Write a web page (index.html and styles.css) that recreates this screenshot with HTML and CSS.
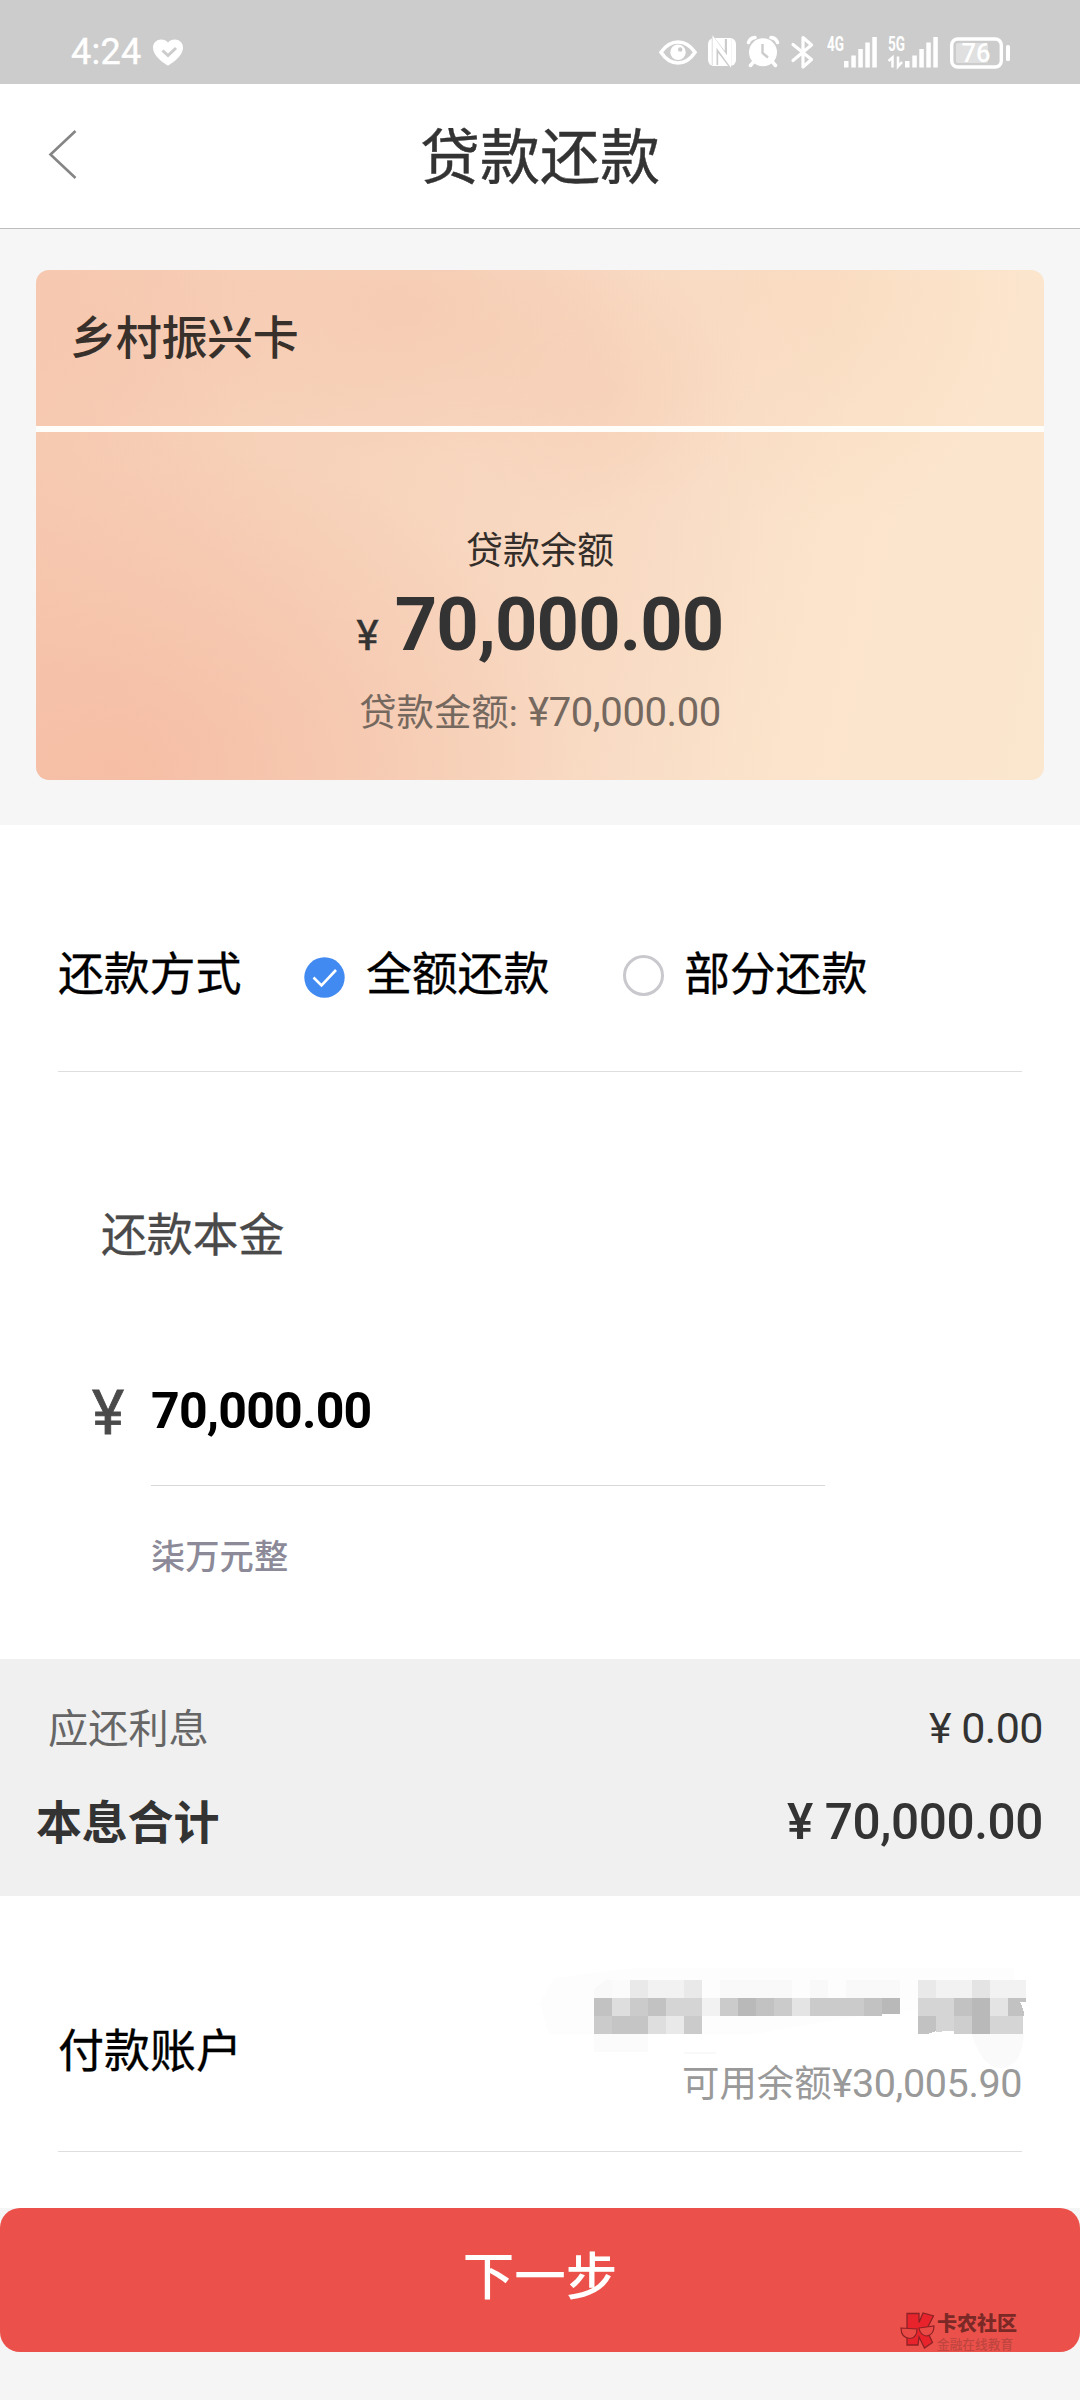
FILE: index.html
```html
<!DOCTYPE html>
<html lang="zh-CN">
<head>
<meta charset="utf-8">
<title>贷款还款</title>
<link rel="stylesheet" href="styles.css">
</head>
<body>
<div class="status">
  <span class="time">4:24</span>
  <svg class="heart" width="30" height="27" viewBox="0 0 30 27"><path fill="#fff" d="M15 26.500C12 25 0 17.500 0 8.500 0 3.500 4 .5 8 .5c3 0 5.500 1.200 7 3 1.500-1.800 4-3 7-3 4 0 8 3 8 8 0 9-12 16.500-15 18z"/><path d="M9.500 11.500l5.500 5 8-7.500" fill="none" stroke="#ccc" stroke-width="3"/></svg>
  <div class="icons">
    <svg width="38" height="36" viewBox="0 0 38 36"><path d="M2 18.300C7 11 12.500 8 19 8s12 3 17 10.300C31 26 25.500 29 19 29S7 26 2 18.300z" fill="none" stroke="#fff" stroke-width="3.600"/><circle cx="19" cy="18.300" r="7.700" fill="#fff"/><circle cx="21.200" cy="15.500" r="2.200" fill="#ccc"/></svg>
    <svg class="nfc" width="28" height="36" viewBox="0 0 28 36"><rect y="4" width="28" height="28" rx="6" fill="#fff"/><path d="M7 31V9.500l13 17V5" fill="none" stroke="#ccc" stroke-width="6.400"/><path d="M6.500 32V7.500l14.500 20V4" fill="none" stroke="#fff" stroke-width="4"/></svg>
    <svg class="alarm" width="32" height="36" viewBox="0 0 32 36"><circle cx="16" cy="18.300" r="14" fill="#fff"/><path d="M1.500 8.500Q3 4 8 3.500M30.500 8.500Q29 4 24 3.500M6.500 28L3.500 31.500M25.500 28l3 3.500" stroke="#fff" stroke-width="3.500" fill="none" stroke-linecap="round"/><path d="M15.500 10v9l5.500 4.500" fill="none" stroke="#ccc" stroke-width="2.400"/></svg>
    <svg class="bt" width="24" height="36" viewBox="0 0 24 36"><path d="M2 10.500l18.500 15-8.500 7.500V3.500l8.500 7.500L2 26.500" fill="none" stroke="#fff" stroke-width="3.200" stroke-linejoin="round" stroke-linecap="round"/></svg>
    <svg class="sig" width="50" height="36" viewBox="0 0 50 36"><text x="0" y="17.300" class="net" textLength="17" lengthAdjust="spacingAndGlyphs">4G</text><path fill="#fff" d="M17 27h4.500v6.500H17zM24.300 21.500h4.500v12h-4.500zM31.300 15h4.500v18.500h-4.500zM38.300 8.500h4.500v25h-4.500zM45.300 3h4.500v30.500h-4.500z"/></svg>
    <svg class="sig2" width="50" height="36" viewBox="0 0 50 36"><text x="0" y="17.300" class="net" textLength="17" lengthAdjust="spacingAndGlyphs">5G</text><path fill="#fff" d="M17 27h4.500v6.500H17zM24.300 21.500h4.500v12h-4.500zM31.300 15h4.500v18.500h-4.500zM38.300 8.500h4.500v25h-4.500zM45.300 3h4.500v30.500h-4.500z"/><path d="M.5 27l4-3.500V33.500M10 22.500v10l4-4.500" fill="none" stroke="#fff" stroke-width="2.500"/></svg>
    <svg class="bat" width="61" height="36" viewBox="0 0 61 36"><rect x="1.700" y="5" width="49.600" height="28" rx="6" fill="none" stroke="#fff" stroke-width="3.400"/><rect x="6" y="9" width="32" height="20" rx="2" fill="#e0e0e0"/><text x="11.500" y="28" class="level" textLength="29">76</text><rect x="56" y="11" width="4" height="16" rx="1.500" fill="#fff"/></svg>
  </div>
</div>
<header class="bar">
  <svg class="back" width="30" height="52" viewBox="0 0 30 52"><path d="M27.500 3L2.500 26.500l25 23.500" fill="none" stroke="#858585" stroke-width="2.600"/></svg>
  <h1>贷款还款</h1>
</header>
<section class="hero">
  <div class="card">
    <div class="card-name">乡村振兴卡</div>
    <div class="card-body">
      <div class="label">贷款余额</div>
      <div class="balance"><span class="yen">¥</span><b>70,000.00</b></div>
      <div class="total">贷款金额: <span>¥70,000.00</span></div>
    </div>
  </div>
</section>
<main>
  <div class="mode">
    <span class="mode-label">还款方式</span>
    <svg class="on" width="41" height="41" viewBox="0 0 41 41"><circle cx="20.500" cy="20.500" r="20.200" fill="#408af2"/><path d="M9.500 20.500l8 8 14.500-15.500" fill="none" stroke="#fff" stroke-width="2.600"/></svg>
    <span class="opt">全额还款</span>
    <span class="off"></span>
    <span class="opt2">部分还款</span>
  </div>
  <div class="principal">还款本金</div>
  <div class="entry"><span class="entry-yen">¥</span><div class="entry-value">70,000.00</div></div>
  <div class="words">柒万元整</div>
</main>
<section class="sum">
  <div class="row"><span class="interest">应还利息</span><span class="zero">¥ 0.00</span></div>
  <div class="row strong"><span>本息合计</span><span class="sum-total">¥ 70,000.00</span></div>
</section>
<section class="account">
  <div class="account-row">
    <span class="account-label">付款账户</span>
    <div class="account-info">
      <svg class="mosaic" width="486" height="78" viewBox="-54 -12 486 78" shape-rendering="crispEdges">
        <path fill="#fdfdfd" d="M-54 24L-40 -2 40 -12H420V30H300L160 54H-45z"/>
        <path fill="#fafafa" shape-rendering="auto" d="M378 54h52q-2 34-25 34-18-2-27-34z"/>
        <path fill="#f9f9f9" d="M0 9L12 0H18V18H0zM126 0h72v18h-72zM216 0h18v18h-18zM252 0h54v18h-54zM90 72h32v2H90z"/>
        <path fill="#fbfbfb" d="M18 0h18v18H18zM0 54h54v18H0z"/>
        <path fill="#e9e9e9" d="M36 0h18v18H36zM90 0h18v18H90zM324 0h18v18h-18zM72 36h18v18H72z"/>
        <path fill="#f2f2f2" d="M54 0h36v18H54zM108 18h18v18h-18zM342 0h36v18h-36zM396 0h36v18h-36z"/>
        <path fill="#e4e4e4" d="M378 0h18v18h-18zM198 18h18v18h-18zM396 18h18v18h-18z"/>
        <path fill="#c2c2c2" d="M0 18h18v18H0zM54 18h18v18H54zM162 18h18v18h-18zM270 18h18v18h-18zM360 18h18v18h-18zM324 36h18v15l-9 3h-9zM414 18h18v4h-6q4 7 4 14h-16z"/>
        <path fill="#dedede" d="M18 18h18v18H18zM54 36h18v18H54z"/>
        <path fill="#cbcbcb" d="M36 18h18v18H36zM0 36h18v18H0zM90 36h18v18H90zM126 18h18v18h-18zM180 18h18v18h-18zM216 18h54v18h-54z"/>
        <path fill="#d5d5d5" d="M72 18h36v18H72zM324 18h36v18h-36zM342 36h18v15h-6l-12 1zM396 36h33v18h-33z"/>
        <path fill="#c5c5c5" d="M18 36h36v18H18z"/>
        <path fill="#b9b9b9" d="M144 18h18v18h-18zM288 18h18v16h-18zM378 18h18v36h-18z"/>
        <path fill="#cecece" d="M360 36h18v18h-18z"/>
      </svg>
      <div class="available">可用余额<span>¥30,005.90</span></div>
    </div>
  </div>
</section>
<footer class="foot">
  <button class="next">下一步</button>
  <div class="mark">
    <svg width="36" height="38" viewBox="0 0 36 38"><path d="M7 1.500h12v9L23 1l10.500 3-7 13.500 6 13-8 5.500-5.500-11-1 8H7z" fill="#e8232b" stroke="#8d2226" stroke-width="1.300"/><g fill="#ea4a45" stroke="#8d2226" stroke-width="1.200"><path d="M1 16l16 1q0 9-7 9.500Q1 26 1 16zM19 16l15-2q0 9-7.500 10-6.500-1-7.500-8z"/></g></svg>
    <div class="mark-text"><b>卡农社区</b><small>金融在线教育</small></div>
  </div>
</footer>
</body>
</html>
```
FILE: styles.css
```css
* { box-sizing: border-box; margin: 0; padding: 0; }
body { width: 1080px; height: 2400px; background: #fff; font-family: Roboto, "Noto Sans CJK SC", sans-serif; color: #333; overflow: hidden; }
svg { display: block; flex: none; overflow: visible; }
span, div, h1 { white-space: nowrap; }

.status { height: 84px; background: #ccc; display: flex; padding: 34px 69px 0 71px; color: #fff; }
.time { width: 82px; font-size: 36px; line-height: 36px; letter-spacing: .3px; -webkit-text-stroke: .4px #fff; }
.heart { margin-top: 5px; }
.icons { margin-left: auto; display: flex; }
.nfc { margin-left: 11px; }
.alarm { margin-left: 11px; }
.bt { margin-left: 12px; }
.sig { margin-left: 12px; }
.sig2 { margin-left: 11px; }
.bat { margin-left: 12px; }
.net { font-size: 20px; font-weight: 700; fill: #fff; }
.level { font-size: 25.500px; font-weight: 500; fill: #fff; }

.bar { height: 145px; border-bottom: 1px solid #bdbdbd; display: flex; align-items: center; padding: 0 48px; }
.back { margin: -4px -30px 0 0; }
h1 { flex: 1; text-align: center; font-size: 60px; line-height: 80px; font-weight: 400; padding-top: 6px; -webkit-text-stroke: .4px #333; }

.hero { height: 596px; background: #f6f6f6; padding: 41px 36px 0; }
.card { height: 510px; border-radius: 13px; overflow: hidden;
  background:
    radial-gradient(ellipse 150px 130px at 560px 120px, rgba(246,198,172,.4), transparent),
    radial-gradient(ellipse 240px 150px at 370px 40px, rgba(246,198,174,.6), transparent),
    radial-gradient(ellipse 200px 260px at 790px 0, rgba(248,214,186,.5), transparent),
    radial-gradient(ellipse 480px 330px at 80px 500px, rgba(245,187,162,.85), transparent),
    radial-gradient(ellipse 180px 150px at 60px 50px, rgba(246,196,172,.4), transparent),
    linear-gradient(102deg, #f6c9b0 0%, #f7d2ba 28%, #f8d8c1 50%, #f9dcc5 62%, #fbe4cb 76%, #fbe7ce 100%); }
.card-name { height: 156px; padding: 35px 0 0 34px; font-size: 46px; letter-spacing: -.3px; line-height: 66px; font-weight: 500; color: #38302b; }
.card-body { height: 354px; border-top: 6px solid #fffefb; padding-top: 95px; text-align: center; }
.label { font-size: 37px; line-height: 50px; color: #332e2a; }
.balance { margin-top: 8px; line-height: 80px; height: 80px; color: #333; }
.balance b { font-size: 74px; font-weight: 700; letter-spacing: -.9px; }
.yen { font-size: 42px; margin-right: 16px; -webkit-text-stroke: .5px #333; }
.total { margin-top: 23px; font-size: 37.400px; line-height: 50px; color: #75685f; }
.total span { font-size: 40px; letter-spacing: -.4px; margin-left: 1px; }

main { height: 834px; padding: 0 58px; }
.mode { height: 247px; padding-top: 119px; border-bottom: 1px solid #dedede; display: flex; font-size: 46px; line-height: 60px; letter-spacing: -.2px; color: #000; -webkit-text-stroke: .3px #000; }
.mode-label { width: 246px; }
.on { margin-top: 13px; }
.opt { margin-left: 21px; width: 257px; }
.off { width: 41px; height: 41px; margin-top: 11px; border: 3px solid #c8c8cd; border-radius: 50%; }
.opt2 { margin-left: 20px; }
.principal { margin: 133px 0 0 43px; font-size: 46px; line-height: 60px; letter-spacing: -.2px; color: #4a4a4a; -webkit-text-stroke: .3px #4a4a4a; }
.entry { margin-top: 116px; display: flex; line-height: 60px; }
.entry-yen { width: 93px; padding-left: 34px; font-size: 61px; padding-top: 2px; color: #4a4a4a; height: 60px; -webkit-text-stroke: .8px #4a4a4a; }
.entry-value { width: 674px; height: 105px; border-bottom: 1px solid #d8d8da; font-size: 50px; font-weight: 700; color: #000; letter-spacing: -.8px; }
.words { margin: 51px 0 0 93px; font-size: 34.300px; line-height: 40px; font-weight: 500; color: #8c8a98; }

.sum { height: 237px; background: #f0f0f0; padding: 41px 37px 0 36px; }
.row { display: flex; justify-content: space-between; height: 60px; line-height: 60px; }
.interest { font-size: 40.200px; color: #666; padding-left: 12px; }
.zero { font-size: 43px; letter-spacing: -.5px; margin-top: -2px; }
.strong { margin-top: 33px; font-size: 46px; letter-spacing: -.2px; font-weight: 700; }
.sum-total { font-size: 49.500px; font-weight: 500; letter-spacing: -.4px; margin-top: -1px; }

.account { height: 312px; padding: 0 58px; }
.account-row { height: 256px; border-bottom: 1px solid #dedede; display: flex; justify-content: space-between; }
.account-label { padding-top: 125px; font-size: 46px; line-height: 60px; color: #000; -webkit-text-stroke: .3px #000; }
.account-info { padding-top: 72px; margin-right: -4px; }
.available { text-align: right; padding-right: 4px; margin-top: 13px; font-size: 37.400px; line-height: 50px; color: #999; }
.available span { font-size: 39.500px; letter-spacing: -.4px; }

.foot { height: 192px; background: #f5f5f6; position: relative; }
.next { display: block; width: 1080px; height: 144px; border: 0; border-radius: 20px; background: #eb514a; color: #fff; font: 500 51.500px/80px Roboto, "Noto Sans CJK SC", sans-serif; padding-bottom: 5px; }
.mark { position: absolute; left: 900px; top: 104px; display: flex; }
.mark-text { margin: 1px 0 0 1px; }
.mark b { display: block; font-size: 20px; line-height: 22px; color: #7a2927; font-weight: 900; }
.mark small { display: block; font-size: 12.700px; line-height: 14px; margin-top: 3px; color: #c0443f; font-weight: 500; }
```
